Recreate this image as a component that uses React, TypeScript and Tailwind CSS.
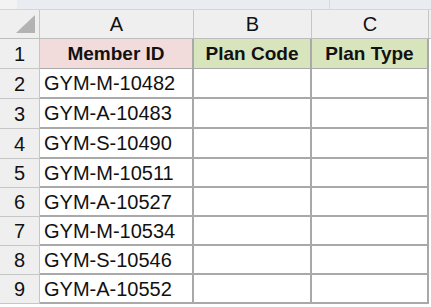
const ids = [
  'GYM-M-10482',
  'GYM-A-10483',
  'GYM-S-10490',
  'GYM-M-10511',
  'GYM-A-10527',
  'GYM-M-10534',
  'GYM-S-10546',
  'GYM-A-10552',
];

// row heights in the screenshot are not all equal
const rowHeights = ['h-[30px]', 'h-[30px]', 'h-[30px]', 'h-[29px]', 'h-[29px]', 'h-[29px]', 'h-[29px]', 'h-[29px]'];

export default function App() {
  return (
    <div
      className="w-[431px] h-[307px] overflow-hidden bg-white text-[#111]"
      style={{ fontFamily: '"Liberation Sans", Arial, sans-serif' }}
    >
      {/* formula bar remnant */}
      <div className="flex h-[10px] border-b border-[#d5d5d5]">
        <div className="w-[17px] bg-[#f3f3f3]" />
        <div className="w-[313px] bg-[#e9edf1] border-r border-[#d6dbe0]" />
        <div className="flex-1 bg-[#e9edf1]" />
      </div>

      {/* column headers */}
      <div className="flex h-[29px] bg-[#efefef] border-b border-[#bdbdbd] text-[20px] leading-none">
        <div className="relative w-[40px] border-r border-[#c6c6c6]">
          <div className="absolute right-[4px] bottom-[5px] w-0 h-0 border-l-[19px] border-l-transparent border-b-[18px] border-b-[#b3b3b3]" />
        </div>
        <div className="w-[154px] flex items-center justify-center border-r border-[#c6c6c6]">A</div>
        <div className="w-[118px] flex items-center justify-center border-r border-[#c6c6c6]">B</div>
        <div className="w-[117px] flex items-center justify-center border-r border-[#c6c6c6]">C</div>
        <div className="flex-1" />
      </div>

      {/* header row 1 */}
      <div className="flex h-[30px] text-[19px] leading-none">
        <div className="w-[40px] flex items-center justify-center text-[20px] bg-[#efefef] border-r border-b border-[#c6c6c6]">1</div>
        <div className="w-[154px] flex items-center justify-center font-bold bg-[#f2dcdb] border-r-2 border-b border-[#a9a9a9]">Member ID</div>
        <div className="w-[118px] flex items-center justify-center font-bold bg-[#d8e4bc] border-r-2 border-b border-[#a9a9a9]">Plan Code</div>
        <div className="w-[117px] flex items-center justify-center font-bold bg-[#d8e4bc] border-r-2 border-b border-[#a9a9a9]">Plan Type</div>
        <div className="flex-1" />
      </div>

      {ids.map((id, i) => (
        <div key={id} className={`flex ${rowHeights[i]} text-[20px] leading-none`}>
          <div className="w-[40px] flex items-center justify-center bg-[#efefef] border-r border-b border-[#c6c6c6]">{i + 2}</div>
          <div className="w-[154px] flex items-center pl-[4px] border-r-2 border-b-2 border-[#a9a9a9]">{id}</div>
          <div className="w-[118px] border-r-2 border-b-2 border-[#a9a9a9]" />
          <div className="w-[117px] border-r-2 border-b-2 border-[#a9a9a9]" />
          <div className="flex-1" />
        </div>
      ))}
    </div>
  );
}
